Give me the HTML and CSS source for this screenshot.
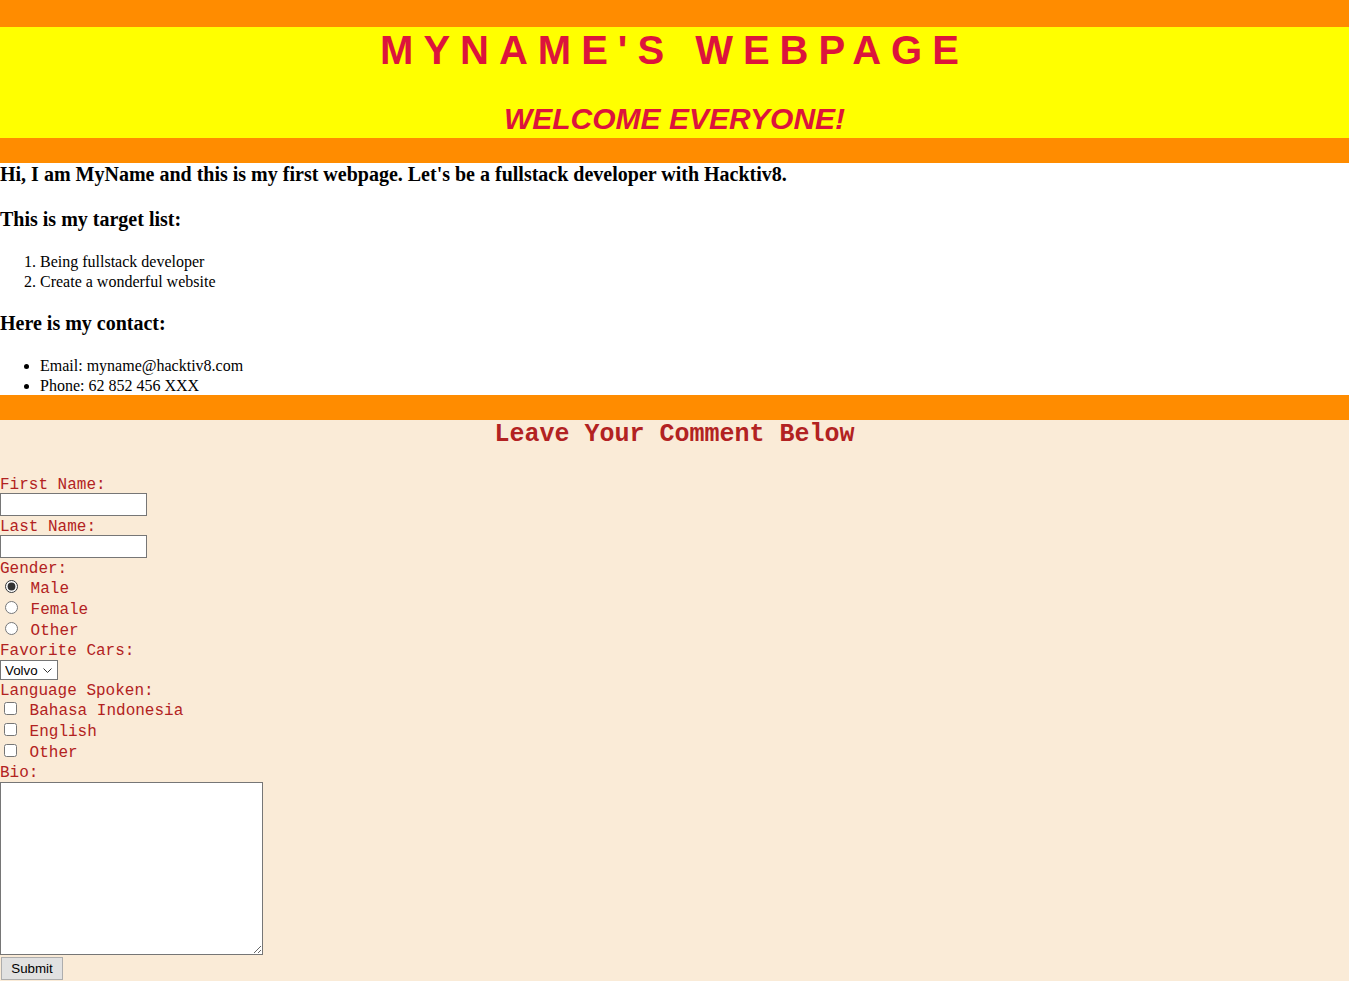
FILE: index.html
```html
<!DOCTYPE html>
<html lang="en">
<head>
<meta charset="utf-8">
<title>MyName's Webpage</title>
<link rel="stylesheet" href="styles.css">
</head>
<body>
<header class="site-header">
  <h1 class="site-title">MYNAME'S WEBPAGE</h1>
  <h2 class="site-subtitle">WELCOME EVERYONE!</h2>
</header>

<main class="content">
  <h3 class="content-heading intro">Hi, I am MyName and this is my first webpage. Let's be a fullstack developer with Hacktiv8.</h3>
  <h3 class="content-heading">This is my target list:</h3>
  <ol class="content-list">
    <li>Being fullstack developer</li>
    <li>Create a wonderful website</li>
  </ol>
  <h3 class="content-heading">Here is my contact:</h3>
  <ul class="content-list">
    <li>Email: myname@hacktiv8.com</li>
    <li>Phone: 62 852 456 XXX</li>
  </ul>
</main>

<section class="comment-section">
  <h2 class="comment-title">Leave Your Comment Below</h2>
  <form class="comment-form">
    <label class="field-label" for="first">First Name:</label>
    <input class="text-field" type="text" id="first">
    <label class="field-label" for="last">Last Name:</label>
    <input class="text-field" type="text" id="last">

    <div class="field-label">Gender:</div>
    <div class="option-row"><input class="radio" type="radio" name="gender" id="male" checked> <label for="male">Male</label></div>
    <div class="option-row"><input class="radio" type="radio" name="gender" id="female"> <label for="female">Female</label></div>
    <div class="option-row"><input class="radio" type="radio" name="gender" id="other"> <label for="other">Other</label></div>

    <label class="field-label" for="cars">Favorite Cars:</label>
    <select class="car-select" id="cars">
      <option>Volvo</option>
      <option>Saab</option>
      <option>Fiat</option>
      <option>Audi</option>
    </select>

    <div class="field-label">Language Spoken:</div>
    <div class="option-row"><input class="check" type="checkbox" id="lang1"> <label for="lang1">Bahasa Indonesia</label></div>
    <div class="option-row"><input class="check" type="checkbox" id="lang2"> <label for="lang2">English</label></div>
    <div class="option-row"><input class="check" type="checkbox" id="lang3"> <label for="lang3">Other</label></div>

    <label class="field-label" for="bio">Bio:</label>
    <textarea class="bio" id="bio"></textarea>
    <input class="submit-btn" type="submit" value="Submit">
  </form>
</section>
</body>
</html>
```

FILE: styles.css
```css
html, body {
  margin: 0;
  padding: 0;
}

body {
  background: #ff8c00;
  padding-top: 27px;
}

/* Header */
.site-header {
  background: #ffff00;
  padding: 0 0 2px;
  text-align: center;
  font-family: "Liberation Sans", Arial, sans-serif;
  color: #dc143c;
}

.site-title {
  margin: 0;
  font-size: 40px;
  line-height: 46px;
  font-weight: bold;
  letter-spacing: 10px;
}

.site-subtitle {
  margin: 28px 0 0;
  font-size: 30px;
  line-height: 35px;
  font-weight: bold;
  font-style: italic;
}

/* Content */
.content {
  display: block;
  background: #ffffff;
  margin-top: 25px;
  padding: 0.1px 0;
  font-family: "Liberation Serif", "Times New Roman", serif;
  color: #000;
  font-size: 16px;
  line-height: 20px;
}

.content-heading {
  font-size: 20px;
  line-height: 24px;
  font-weight: bold;
  margin: 20px 0;
}

.content-heading.intro {
  margin-top: -1.1px;
  margin-bottom: 21px;
}

.content-list {
  margin: 20px 0;
  padding-left: 40px;
}

.content-list li {
  position: relative;
  top: 1px;
}

.content-list:last-child {
  margin-bottom: -0.1px;
}

/* Comment form */
.comment-section {
  background: #faebd7;
  margin-top: 25px;
  padding-bottom: 40px;
  font-family: "Courier New", "Nimbus Mono PS", "Nimbus Mono L", "FreeMono", "Liberation Mono", monospace;
  color: #b22222;
  font-size: 16px;
}

.comment-title {
  margin: 0 0 25px;
  padding-top: 1px;
  text-align: center;
  font-size: 25px;
  font-weight: bold;
  line-height: 28px;
}

.comment-form {
  margin: 0;
}

.field-label {
  display: block;
  padding-top: 4px;
  line-height: 15px;
}

.text-field {
  display: block;
  box-sizing: border-box;
  width: 147px;
  height: 23px;
  margin: 0;
  border: 1px solid #767676;
  background: #fff;
}

.option-row {
  height: 21px;
  line-height: 18px;
  white-space: nowrap;
}

.radio {
  margin: 3px 3px 0 5px;
  width: 13px;
  height: 13px;
  accent-color: #333333;
}

.check {
  margin: 3px 3px 3px 4px;
  width: 13px;
  height: 13px;
  accent-color: #333333;
}

.car-select {
  display: block;
  box-sizing: border-box;
  width: 58px;
  height: 20px;
  margin: 1px 0 0;
  padding: 0 0 0 4px;
  appearance: none;
  -webkit-appearance: none;
  border: 1px solid #767676;
  border-radius: 0;
  background: #fff url("data:image/svg+xml,%3Csvg xmlns='http://www.w3.org/2000/svg' width='9' height='5' viewBox='0 0 9 5'%3E%3Cpath d='M0.5 0.5 L4.5 4.5 L8.5 0.5' fill='none' stroke='%23333' stroke-width='1'/%3E%3C/svg%3E") no-repeat right 5px center;
  font-family: "Liberation Sans", Arial, sans-serif;
  font-size: 13.33px;
  color: #000;
}

.bio {
  display: block;
  box-sizing: border-box;
  width: 263px;
  height: 173px;
  margin: 1px 0 0;
  border: 1px solid #767676;
  background: #fff;
}

.submit-btn {
  display: block;
  box-sizing: border-box;
  width: 62px;
  height: 23px;
  margin: 2px 0 0 1px;
  padding: 0;
  background: #e1e1e1;
  border: 1px solid #adadad;
  border-radius: 0;
  font-family: "Liberation Sans", Arial, sans-serif;
  font-size: 13.33px;
  color: #000;
}
```
